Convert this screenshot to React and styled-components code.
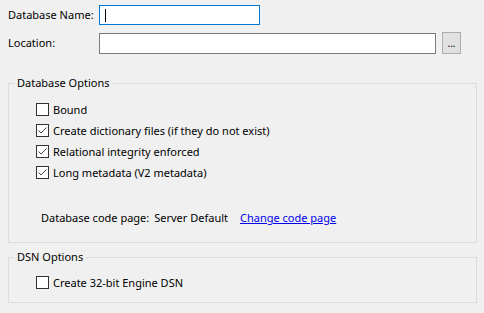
import React from "react";
import styled, { createGlobalStyle } from "styled-components";

const Global = createGlobalStyle`
  html, body { margin: 0; padding: 0; background: #f0f0f0; }
  body { font-family: "Noto Sans", "Open Sans", sans-serif; font-size: 11px; color: #000; }
`;

const Page = styled.div`
  width: 484px;
  height: 313px;
  box-sizing: border-box;
  padding: 5px 7px 0 8px;
  display: flex;
  flex-direction: column;
`;

const FieldRow = styled.div`
  display: flex;
  align-items: center;
  height: ${(p) => p.$h}px;
  margin-top: ${(p) => p.$mt || 0}px;
`;

const Label = styled.label`
  width: 91px;
  flex: none;
  line-height: 14px;
`;

const TextInput = styled.div`
  box-sizing: border-box;
  width: ${(p) => p.$w}px;
  height: ${(p) => p.$h}px;
  background: #fff;
  border: 1px solid ${(p) => (p.$focus ? "#0078d7" : "#7a7a7a")};
  display: flex;
  align-items: center;
  padding-left: 5px;
`;

const Caret = styled.span`
  width: 1px;
  height: 13px;
  background: #000;
`;

const BrowseButton = styled.button`
  box-sizing: border-box;
  width: 19px;
  height: 22px;
  margin-left: 6px;
  padding: 0 0 5px;
  background: #e1e1e1;
  border: 1px solid #adadad;
  font: inherit;
  font-size: 10px;
  line-height: 1;
  display: flex;
  align-items: flex-end;
  justify-content: center;
`;

const Group = styled.fieldset`
  box-sizing: border-box;
  margin: ${(p) => p.$mt}px 0 0;
  width: 469px;
  height: ${(p) => p.$h}px;
  border: 1px solid #dcdcdc;
  padding: 0;
  display: flex;
  flex-direction: column;
`;

const Legend = styled.legend`
  margin-left: 5px;
  padding: 0 3px;
  line-height: 14px;
`;

const CheckList = styled.div`
  display: flex;
  flex-direction: column;
  gap: 8px;
  margin: ${(p) => p.$mt}px 0 0 27px;
`;

const CheckRow = styled.label`
  display: flex;
  align-items: center;
  gap: 4px;
  height: 13px;
  line-height: 14px;
`;

const Box = styled.span`
  box-sizing: border-box;
  width: 13px;
  height: 13px;
  flex: none;
  border: 1px solid #333;
  background: #fff;
  display: flex;
  align-items: center;
  justify-content: center;
`;

const CodePageRow = styled.div`
  display: flex;
  align-items: center;
  margin: 32px 0 0 32px;
  line-height: 14px;
`;

const Value = styled.span`
  margin-left: 5px;
`;

const Link = styled.a`
  margin-left: 12px;
  color: #0000ee;
  text-decoration: underline;
  cursor: pointer;
`;

function Check({ checked, children }) {
  return (
    <CheckRow>
      <Box>
        {checked && (
          <svg width="11" height="11" viewBox="0 0 11 11">
            <path d="M1.5 5.5 L4 8 L9.5 2.5" fill="none" stroke="#444" strokeWidth="1" />
          </svg>
        )}
      </Box>
      <span>{children}</span>
    </CheckRow>
  );
}

export default function App() {
  return (
    <>
      <Global />
      <Page>
        <FieldRow $h={20}>
          <Label>Database Name:</Label>
          <TextInput $w={161} $h={20} $focus>
            <Caret />
          </TextInput>
        </FieldRow>
        <FieldRow $h={22} $mt={7}>
          <Label>Location:</Label>
          <TextInput $w={337} $h={21} />
          <BrowseButton>...</BrowseButton>
        </FieldRow>
        <Group $mt={22} $h={167}>
          <Legend>Database Options</Legend>
          <CheckList $mt={13}>
            <Check>Bound</Check>
            <Check checked>Create dictionary files (if they do not exist)</Check>
            <Check checked>Relational integrity enforced</Check>
            <Check checked>Long metadata (V2 metadata)</Check>
          </CheckList>
          <CodePageRow>
            Database code page:
            <Value>Server Default</Value>
            <Link>Change code page</Link>
          </CodePageRow>
        </Group>
        <Group $mt={7} $h={53}>
          <Legend>DSN Options</Legend>
          <CheckList $mt={12}>
            <Check>Create 32-bit Engine DSN</Check>
          </CheckList>
        </Group>
      </Page>
    </>
  );
}
